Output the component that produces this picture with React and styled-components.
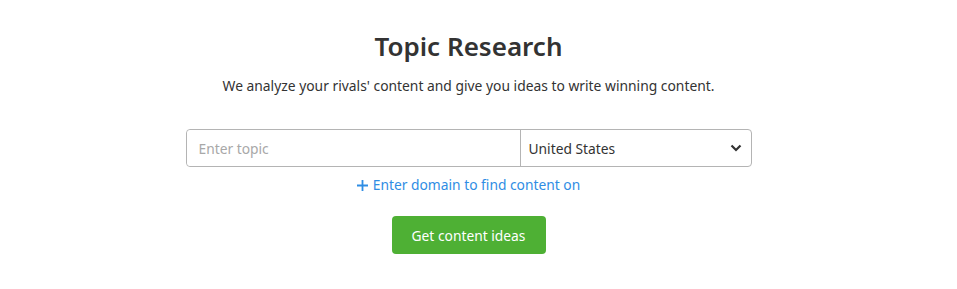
import React from 'react';
import styled, { createGlobalStyle } from 'styled-components';

const GlobalStyle = createGlobalStyle`
    body {
        margin: 0;
        background: #fff;
        font-family: 'Noto Sans', 'Open Sans', sans-serif;
        color: #333;
    }
`;

const Page = styled.div`
    width: 937px;
    display: flex;
    flex-direction: column;
    align-items: center;
    padding-top: 28px;
`;

const Title = styled.h1`
    margin: 0;
    font-size: 26px;
    font-weight: 600;
    line-height: 36px;
    color: #333;
`;

const Subtitle = styled.p`
    margin: 12px 0 0;
    font-size: 13.85px;
    line-height: 20px;
    color: #333;
`;

const SearchBox = styled.div`
    margin-top: 33px;
    width: 566px;
    height: 38px;
    box-sizing: border-box;
    display: flex;
    border: 1px solid #b4b4b4;
    border-radius: 4px;
`;

const TopicInput = styled.input`
    width: 334px;
    box-sizing: border-box;
    border: none;
    border-right: 1px solid #b4b4b4;
    border-radius: 4px 0 0 4px;
    padding: 0 12px;
    font-family: inherit;
    font-size: 13.8px;
    color: #333;
    outline: none;
    &::placeholder {
        color: #a8a8a8;
    }
`;

const CountrySelect = styled.div`
    flex: 1;
    display: flex;
    align-items: center;
    justify-content: space-between;
    padding: 0 8px 0 8px;
    font-size: 13.8px;
    color: #333;
`;

const DomainLink = styled.a`
    margin-top: 8px;
    display: flex;
    align-items: center;
    gap: 5px;
    font-size: 13.8px;
    line-height: 20px;
    color: #2f8de4;
    text-decoration: none;
    cursor: pointer;
`;

const SubmitButton = styled.button`
    margin-top: 21px;
    width: 154px;
    height: 38px;
    border: none;
    border-radius: 4px;
    background: #4eb034;
    color: #fff;
    font-family: inherit;
    font-size: 13.8px;
    cursor: pointer;
`;

function Chevron() {
    return (
        <svg width="14" height="14" viewBox="0 0 14 14">
            <path d="M2.5 4.5 L7 9 L11.5 4.5" fill="none" stroke="#333" strokeWidth="2.2" />
        </svg>
    );
}

function Plus() {
    return (
        <svg width="11" height="11" viewBox="0 0 11 11">
            <path d="M5.5 0 V11 M0 5.5 H11" stroke="#2f8de4" strokeWidth="1.8" />
        </svg>
    );
}

export default function App() {
    return (
        <>
            <GlobalStyle />
            <Page>
                <Title>Topic Research</Title>
                <Subtitle>
                    We analyze your rivals' content and give you ideas to write winning content.
                </Subtitle>
                <SearchBox>
                    <TopicInput placeholder="Enter topic" />
                    <CountrySelect>
                        <span>United States</span>
                        <Chevron />
                    </CountrySelect>
                </SearchBox>
                <DomainLink>
                    <Plus />
                    Enter domain to find content on
                </DomainLink>
                <SubmitButton>Get content ideas</SubmitButton>
            </Page>
        </>
    );
}
